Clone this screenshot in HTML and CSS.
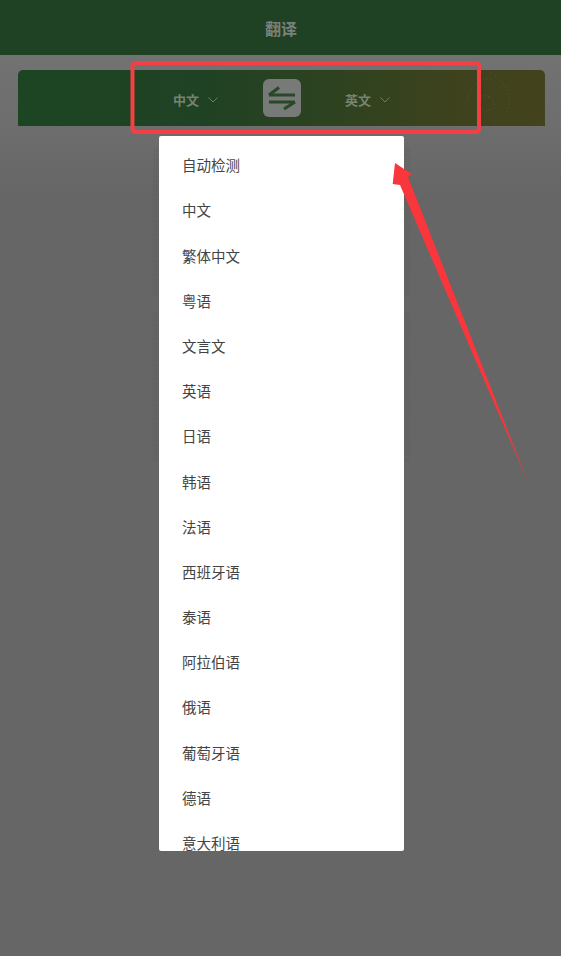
FILE: index.html
```html
<!DOCTYPE html>
<html lang="zh">
<head>
<meta charset="utf-8">
<title>翻译</title>
<link rel="stylesheet" href="styles.css">
</head>
<body>
<div class="page">
  <header class="topbar">翻译</header>
  <section class="card">
    <svg class="rings" viewBox="0 0 100 56" aria-hidden="true">
      <g fill="none" stroke="#66663a" stroke-width="0.8" stroke-dasharray="0.8 3">
        <path d="M41 28a12 12 0 0 1 14 0"/>
        <path d="M30 30a26 26 0 0 1 26 -22"/>
        <path d="M58 6a28 28 0 0 1 14 22"/>
        <path d="M72 30a22 22 0 0 1 -14 22"/>
        <circle cx="50" cy="34" r="7"/>
      </g>
    </svg>
    <button class="lang" type="button">中文<svg class="chev" viewBox="0 0 10 6" aria-hidden="true"><path d="M.5.5 5 5 9.500.5"/></svg></button>
    <div class="swap">
      <svg viewBox="0 0 38 38" aria-hidden="true"><path d="M6 16 16 8.500M6 16H32M6 23H32M32 23 21 30"/></svg>
    </div>
    <button class="lang" type="button">英文<svg class="chev" viewBox="0 0 10 6" aria-hidden="true"><path d="M.5.5 5 5 9.500.5"/></svg></button>
  </section>

  <div class="stipple stipple-a"></div>
  <div class="stipple stipple-b"></div>

  <ul class="menu">
    <li>自动检测</li>
    <li>中文</li>
    <li>繁体中文</li>
    <li>粤语</li>
    <li>文言文</li>
    <li>英语</li>
    <li>日语</li>
    <li>韩语</li>
    <li>法语</li>
    <li>西班牙语</li>
    <li>泰语</li>
    <li>阿拉伯语</li>
    <li>俄语</li>
    <li>葡萄牙语</li>
    <li>德语</li>
    <li>意大利语</li>
  </ul>

  <svg class="markup" viewBox="0 0 561 956" aria-hidden="true">
    <rect class="frame" x="132.500" y="63" width="346.500" height="69" rx="3"/>
    <polygon class="arrow" points="395,163 411.700,174 408,177 528,482 400,185 392.700,184"/>
  </svg>
</div>
</body>
</html>
```
FILE: styles.css
```css
* { box-sizing: border-box; }
html, body { margin: 0; padding: 0; }
body {
  font-family: "Noto Sans CJK SC", "Liberation Sans", sans-serif;
  background: #666;
}
.page {
  position: relative;
  width: 561px;
  height: 956px;
  overflow: hidden;
  background: linear-gradient(180deg, #727272 55px, #6d6d6d 130px, #666 190px);
}
.topbar {
  height: 55px;
  display: flex;
  align-items: center;
  justify-content: center;
  padding: 1px 0 0 1px;
  background: #1f4124;
  color: #7a807b;
  font-size: 16px;
  font-weight: 700;
}
.card {
  position: relative;
  margin: 15px 16px 0 18px;
  height: 56px;
  display: flex;
  align-items: center;
  justify-content: center;
  gap: 44px;
  padding-top: 4px;
  border-radius: 5px 5px 0 0;
  background: linear-gradient(90deg, #1c4522 0%, #1f4224 35%, #2e4220 60%, #3c421d 80%, #43431c 100%);
  overflow: hidden;
}
.rings {
  position: absolute;
  right: 8px;
  top: 0;
  width: 100px;
  height: 56px;
}
.lang {
  position: relative;
  width: 45px;
  padding: 0;
  border: 0;
  background: none;
  display: flex;
  align-items: center;
  justify-content: space-between;
  color: #77836f;
  font: 700 13px/18px "Noto Sans CJK SC", sans-serif;
}
.chev {
  width: 10px;
  height: 6px;
  fill: none;
  stroke: #6c7a68;
  stroke-width: 1;
}
.swap {
  position: relative;
  width: 38px;
  height: 38px;
  margin: -4px 0 0 1px;
  border-radius: 6px;
  background: #787a78;
}
.swap svg {
  display: block;
  width: 38px;
  height: 38px;
  fill: none;
  stroke: #284828;
  stroke-width: 3.200;
}
.stipple {
  position: absolute;
  left: 153px;
  width: 258px;
  background-image: radial-gradient(circle, #5b5b5b 0.6px, transparent 0.9px);
  background-size: 2.500px 2.500px;
}
.stipple-a { top: 148px; height: 148px; }
.stipple-b { top: 312px; height: 150px; }
.menu {
  position: absolute;
  left: 159px;
  top: 136px;
  width: 245px;
  height: 715px;
  margin: 0;
  padding: 6.200px 0 0 23px;
  list-style: none;
  overflow: hidden;
  background: #fff;
  border-radius: 2px;
  color: #444;
  font-size: 14.500px;
}
.menu li {
  height: 45.200px;
  line-height: 45.200px;
  white-space: nowrap;
}
.markup {
  position: absolute;
  left: 0;
  top: 0;
  width: 561px;
  height: 956px;
  pointer-events: none;
}
.frame {
  fill: none;
  stroke: #f43f45;
  stroke-width: 4;
}
.arrow { fill: #f9363c; }
```
